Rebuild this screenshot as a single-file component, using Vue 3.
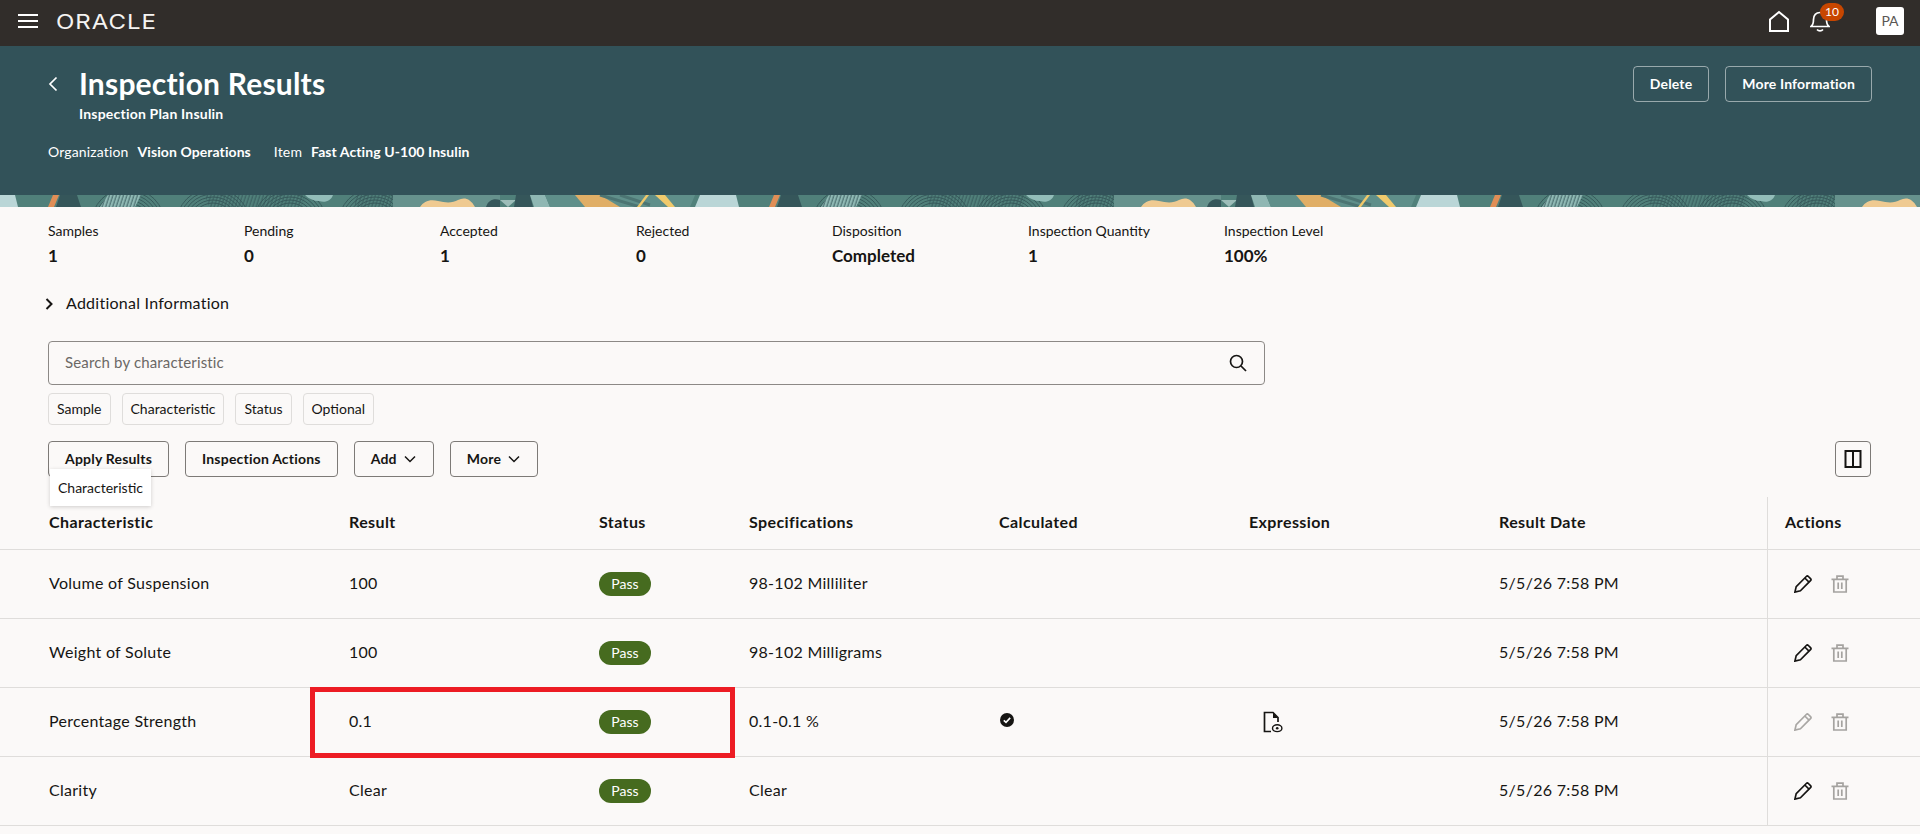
<template>
  <div class="page">
    <header class="topbar">
      <button class="menu-btn" aria-label="Menu"><span></span><span></span><span></span></button>
      <span class="logo">ORACLE</span>
      <div class="topbar-right">
        <svg class="home" width="24" height="24" viewBox="0 0 24 24" fill="none" stroke="#fff" stroke-width="2">
          <path d="M3 22V10.5L12 3l9 7.5V22z" />
        </svg>
        <div class="bell-wrap">
          <svg width="20" height="22" viewBox="0 0 20 22" fill="none" stroke="#fff" stroke-width="1.7">
            <path d="M1 16.5c2-1.5 2.5-3.5 2.5-7C3.500 5 6 2.500 10 2.500s6.500 2.500 6.500 7c0 3.500.5 5.500 2.500 7z" />
            <path d="M7 19.500c1.500 1.700 4.500 1.700 6 0" />
          </svg>
          <span class="badge">10</span>
        </div>
        <div class="avatar">PA</div>
      </div>
    </header>

    <section class="hero">
      <div class="hero-top">
        <svg class="back" width="10" height="16" viewBox="0 0 10 16" fill="none" stroke="#fff" stroke-width="1.7">
          <path d="M8.500 1.500 2 8l6.500 6.500" />
        </svg>
        <div class="hero-title">
          <h1>Inspection Results</h1>
          <div class="subtitle">Inspection Plan Insulin</div>
        </div>
        <div class="hero-actions">
          <button class="hero-btn">Delete</button>
          <button class="hero-btn">More Information</button>
        </div>
      </div>
      <div class="hero-meta">
        <span>Organization</span><b>Vision Operations</b>
        <span class="meta-item">Item</span><b>Fast Acting U-100 Insulin</b>
      </div>
    </section>

    <svg class="band" width="100%" height="12" aria-hidden="true">
      <defs>
        <pattern id="hatch" width="3.500" height="12" patternUnits="userSpaceOnUse" patternTransform="skewX(-18)">
          <path d="M1 0v12" stroke="#35565a" stroke-width=".9" />
        </pattern>
        <pattern id="band-tile" width="721" height="12" patternUnits="userSpaceOnUse">
          <rect width="721" height="12" fill="#50807a" />
          <g fill="none" stroke="#2f4f52" stroke-width=".8">
            <circle v-for="a in arcs" :key="a.cx + '-' + a.r" :cx="a.cx" cy="30" :r="a.r" />
          </g>
          <path d="M0 0h15l3 12H0z" fill="#bad6d7" />
          <path d="M53 0h6l-5 12h-6z" fill="#e08e56" />
          <path d="M60 0h17l4 12H56z" fill="#35565a" />
          <path d="M108 0h33l-6 12h-35z" fill="#8fb9b4" />
          <path d="M108 0h33l-6 12h-35zM205 0h100l-4 12h-92zM355 0h38v12h-38z" fill="url(#hatch)" />
          <path d="M305 0h28c-2 6-8 8-14 6-5 0-10-2-14-6z" fill="#93bdb9" />
          <path d="M393 0h107v12H393z" fill="#66928d" />
          <path d="M420 12c4-6 10-8 18-6 8 2 15 2 20-1 6-3 12-2 17 7z" fill="#efca91" />
          <path d="M486 12c2-7 8-9 14-7v7z" fill="#35565a" />
          <path d="M500 5h16l-8 7z" fill="#9dbdb9" />
          <path d="M516 0h14l3 12h-19z" fill="#35565a" />
          <path d="M530 0h15l5 12h-16z" fill="#8fb7b3" />
          <path d="M545 0h150l-5 12H550z" fill="#5f8f8a" />
          <path d="M575 0h25l20 12h-35z" fill="#e0ae66" />
          <path d="M600 0l40 12 M620 0l30 10" stroke="#4c7573" stroke-width="3" />
          <path d="M646 0h3l-9 12h-3z" fill="#efc86a" />
          <path d="M655 0h10l10 12h-7z" fill="#f0ca6c" />
          <path d="M700 0h21v12h-26z" fill="#bad6d7" />
        </pattern>
      </defs>
      <rect width="100%" height="12" fill="url(#band-tile)" />
    </svg>

    <main>
      <div class="stats">
        <div v-for="s in stats" :key="s.label" class="stat">
          <div class="stat-label">{{ s.label }}</div>
          <div class="stat-value">{{ s.value }}</div>
        </div>
      </div>

      <div class="additional">
        <svg width="10" height="14" viewBox="0 0 10 14" fill="none" stroke="#161513" stroke-width="2">
          <path d="M2.500 2 7.500 7l-5 5" />
        </svg>
        <span>Additional Information</span>
      </div>

      <div class="search">
        <span>Search by characteristic</span>
        <svg width="20" height="20" viewBox="0 0 20 20" fill="none" stroke="#161513" stroke-width="1.7">
          <circle cx="8.500" cy="8.500" r="6" />
          <path d="m13 13 5 5" />
        </svg>
      </div>

      <div class="chips">
        <span v-for="c in chips" :key="c" class="chip">{{ c }}</span>
      </div>

      <div class="toolbar">
        <div class="apply-wrap">
          <button class="btn">Apply Results</button>
          <div class="tooltip">Characteristic</div>
        </div>
        <button class="btn">Inspection Actions</button>
        <button class="btn">Add
          <svg width="14" height="14" viewBox="0 0 14 14" fill="none" stroke="#161513" stroke-width="1.500"><path d="m2 4.500 5 5 5-5" /></svg>
        </button>
        <button class="btn">More
          <svg width="14" height="14" viewBox="0 0 14 14" fill="none" stroke="#161513" stroke-width="1.500"><path d="m2 4.500 5 5 5-5" /></svg>
        </button>
        <button class="btn btn-icon" aria-label="Columns">
          <svg width="18" height="18" viewBox="0 0 18 18" fill="none" stroke="#161513" stroke-width="2">
            <rect x="1.500" y="1" width="15" height="16" />
            <path d="M9 1v16" />
          </svg>
        </button>
      </div>

      <div class="table">
        <div class="row head">
          <div v-for="h in headers" :key="h" class="cell">{{ h }}</div>
        </div>
        <div v-for="r in rows" :key="r.name" class="row">
          <div class="cell">{{ r.name }}</div>
          <div class="cell">{{ r.result }}</div>
          <div class="cell"><span class="pass">Pass</span></div>
          <div class="cell">{{ r.spec }}</div>
          <div class="cell">
            <svg v-if="r.calculated" class="check" width="16" height="16" viewBox="0 0 16 16">
              <circle cx="8" cy="8" r="7" fill="#161513" />
              <path d="m4.800 8.300 2.200 2.100 4.200-4.500" fill="none" stroke="#fff" stroke-width="1.600" />
            </svg>
          </div>
          <div class="cell">
            <svg v-if="r.calculated" class="doc" width="20" height="22" viewBox="0 0 20 22" fill="none" stroke="#161513" stroke-width="1.700">
              <path d="M8 20.500H1.500V1.500H10L15 6.500V11" />
              <path d="M10 1.500v5.500h5z" fill="#161513" stroke="none" />
              <ellipse cx="14.200" cy="17.200" rx="4.700" ry="3.400" stroke-width="1.400" />
              <circle cx="14.200" cy="17.200" r="1.300" fill="#161513" stroke="none" />
            </svg>
          </div>
          <div class="cell">{{ r.date }}</div>
          <div class="cell actions">
            <svg width="18" height="18" viewBox="0 0 18 18" fill="none" :stroke="r.calculated ? '#a9a7a4' : '#161513'" stroke-width="1.700">
              <path d="M.9 17.100 2.200 11.600 12.300 1.500a1.500 1.500 0 0 1 2.100 0l2.100 2.100a1.500 1.500 0 0 1 0 2.100L6.400 15.800z" />
              <path d="m10.800 3 4.200 4.200" />
            </svg>
            <svg width="18" height="18" viewBox="0 0 18 18" fill="none" stroke="#a5a3a0" stroke-width="1.700">
              <path d="M.5 4.300h17M6 4V1.200h6V4M2.800 4.300V17h12.400V4.300M7.200 7.500v6.500M10.800 7.500v6.500" />
            </svg>
          </div>
          <div v-if="r.calculated" class="highlight"></div>
        </div>
      </div>
    </main>
  </div>
</template>

<script setup>
const stats = [
  { label: 'Samples', value: '1' },
  { label: 'Pending', value: '0' },
  { label: 'Accepted', value: '1' },
  { label: 'Rejected', value: '0' },
  { label: 'Disposition', value: 'Completed' },
  { label: 'Inspection Quantity', value: '1' },
  { label: 'Inspection Level', value: '100%' }
]

const chips = ['Sample', 'Characteristic', 'Status', 'Optional']

const headers = ['Characteristic', 'Result', 'Status', 'Specifications', 'Calculated', 'Expression', 'Result Date', 'Actions']

const rows = [
  { name: 'Volume of Suspension', result: '100', spec: '98-102 Milliliter', date: '5/5/26 7:58 PM' },
  { name: 'Weight of Solute', result: '100', spec: '98-102 Milligrams', date: '5/5/26 7:58 PM' },
  { name: 'Percentage Strength', result: '0.1', spec: '0.1-0.1 %', date: '5/5/26 7:58 PM', calculated: true },
  { name: 'Clarity', result: 'Clear', spec: 'Clear', date: '5/5/26 7:58 PM' }
]

// concentric rings of the banner tile
const arcs = [128, 213, 290, 375].flatMap((cx) =>
  [22, 25, 28, 31, 34, 37].map((r) => ({ cx, r }))
)
</script>

<style>
html, body {
  background: #fbf9f8;
}
</style>

<style scoped>
.page {
  min-height: 834px;
  background: #fbf9f8;
  color: #161513;
  font-family: Lato, "Liberation Sans", sans-serif;
  font-size: 16px;
}
button {
  font-family: inherit;
}
.topbar {
  height: 46px;
  box-sizing: border-box;
  background: #312d2a;
  display: flex;
  align-items: center;
  padding: 0 16px 4px 18px;
}
.menu-btn {
  width: 20px;
  height: 14px;
  padding: 0;
  background: none;
  border: none;
  display: flex;
  flex-direction: column;
  justify-content: space-between;
}
.menu-btn span {
  height: 2px;
  background: #fff;
}
.logo {
  margin-left: 18px;
  margin-top: 2px;
  color: #f5f4f2;
  font-family: Inter, sans-serif;
  font-weight: 400;
  font-size: 20px;
  letter-spacing: 0.8px;
  transform: scaleX(1.2);
  transform-origin: left;
}
.topbar-right {
  margin-left: auto;
  display: flex;
  align-items: center;
}
.home {
  margin-right: 19px;
}
.bell-wrap {
  position: relative;
  width: 20px;
  height: 22px;
  margin-right: 46px;
}
.badge {
  position: absolute;
  left: 10px;
  top: -7px;
  width: 24px;
  height: 18px;
  border-radius: 9px;
  background: #c74600;
  color: #fff;
  font-size: 12px;
  line-height: 18px;
  text-align: center;
}
.avatar {
  width: 28px;
  height: 28px;
  background: #fff;
  border-radius: 3px;
  color: #5a5754;
  font-size: 14px;
  line-height: 28px;
  text-align: center;
}
.hero {
  height: 149px;
  box-sizing: border-box;
  background: #325259;
  color: #fff;
  padding: 20px 48px 0;
}
.hero-top {
  display: flex;
  align-items: flex-start;
}
.back {
  margin-top: 10px;
  margin-right: 21px;
}
h1 {
  margin: -1px 0 0;
  font-size: 30px;
  line-height: 36px;
  font-weight: 700;
  letter-spacing: 0.2px;
}
.subtitle {
  margin-top: 3px;
  font-size: 14px;
  line-height: 20px;
  font-weight: 700;
  letter-spacing: 0.2px;
}
.hero-actions {
  margin-left: auto;
  display: flex;
  gap: 16px;
}
.hero-btn {
  height: 36px;
  padding: 0 16px 2px;
  background: transparent;
  border: 1px solid rgba(255, 255, 255, 0.5);
  border-radius: 4px;
  color: #fff;
  font-size: 14px;
  font-weight: 700;
  letter-spacing: 0.15px;
}
.hero-meta {
  margin-top: 18px;
  font-size: 14px;
  line-height: 20px;
  letter-spacing: 0.15px;
}
.hero-meta b {
  margin-left: 9px;
  letter-spacing: 0.08px;
}
.meta-item {
  margin-left: 23px;
}
.band {
  display: block;
}
.stats {
  display: flex;
  padding: 14px 48px 0;
}
.stat {
  width: 196px;
}
.stat-label {
  font-size: 14px;
  line-height: 20px;
}
.stat-value {
  margin-top: 5px;
  font-size: 17px;
  line-height: 20px;
  font-weight: 700;
}
.additional {
  margin-top: 26px;
  padding-left: 44px;
  display: flex;
  align-items: center;
  gap: 12px;
  height: 24px;
  letter-spacing: 0.25px;
}
.additional span {
  margin-bottom: 4px;
}
.search {
  margin: 25px 0 0 48px;
  width: 1217px;
  height: 44px;
  box-sizing: border-box;
  border: 1px solid #8c8986;
  border-radius: 4px;
  padding: 0 16px 2px 16px;
  display: flex;
  align-items: center;
  justify-content: space-between;
  font-size: 15px;
  letter-spacing: 0.15px;
  color: #6b6865;
}
.search svg {
  margin-top: 2px;
}
.chips {
  margin: 8px 0 0 48px;
  display: flex;
  gap: 11px;
}
.chip {
  height: 32px;
  box-sizing: border-box;
  padding: 0 8px;
  border: 1px solid #dfdddb;
  border-radius: 4px;
  font-size: 14px;
  line-height: 30px;
}
.toolbar {
  margin-top: 16px;
  padding: 0 49px 0 48px;
  display: flex;
  gap: 16px;
}
.apply-wrap {
  position: relative;
}
.btn {
  height: 36px;
  padding: 0 16px 2px;
  background: transparent;
  border: 1px solid #7d7a77;
  border-radius: 4px;
  color: #161513;
  font-size: 14px;
  font-weight: 700;
  letter-spacing: 0.2px;
  display: flex;
  align-items: center;
  gap: 6px;
}
.btn svg {
  margin-top: 2px;
}
.btn-icon {
  margin-left: auto;
  width: 36px;
  padding: 0;
  justify-content: center;
}
.btn-icon svg {
  margin-top: 0;
}
.tooltip {
  position: absolute;
  left: 2px;
  top: 28px;
  width: 101px;
  height: 37px;
  box-sizing: border-box;
  padding-left: 8px;
  background: #fff;
  box-shadow: 0 1px 4px rgba(0, 0, 0, 0.18);
  font-size: 14px;
  line-height: 37px;
}
.table {
  margin-top: 20px;
  letter-spacing: 0.28px;
}
.row {
  position: relative;
  display: grid;
  grid-template-columns: 349px 250px 150px 250px 250px 250px 268px 1fr;
  height: 69px;
  box-sizing: border-box;
  border-bottom: 1px solid #dfdddb;
}
.row.head {
  height: 53px;
  font-weight: 700;
  letter-spacing: 0.4px;
}
.cell {
  display: flex;
  align-items: center;
  padding-bottom: 4px;
}
.cell:first-child {
  padding-left: 49px;
}
.cell:nth-child(8) {
  padding-left: 17px;
  border-left: 1px solid #dfdddb;
}
.pass {
  margin-top: 4px;
  width: 52px;
  height: 24px;
  border-radius: 12px;
  background: #466b1f;
  color: #fff;
  font-size: 14px;
  line-height: 24px;
  letter-spacing: 0;
  text-align: center;
}
.check {
  margin-bottom: 1px;
}
.doc {
  margin-left: 14px;
  margin-top: 4px;
}
.cell.actions {
  gap: 19px;
  padding-left: 26px;
  padding-bottom: 0;
}
.highlight {
  position: absolute;
  left: 310px;
  top: -1px;
  width: 425px;
  height: 71px;
  box-sizing: border-box;
  border: 5px solid #ed1c24;
  pointer-events: none;
}
</style>
